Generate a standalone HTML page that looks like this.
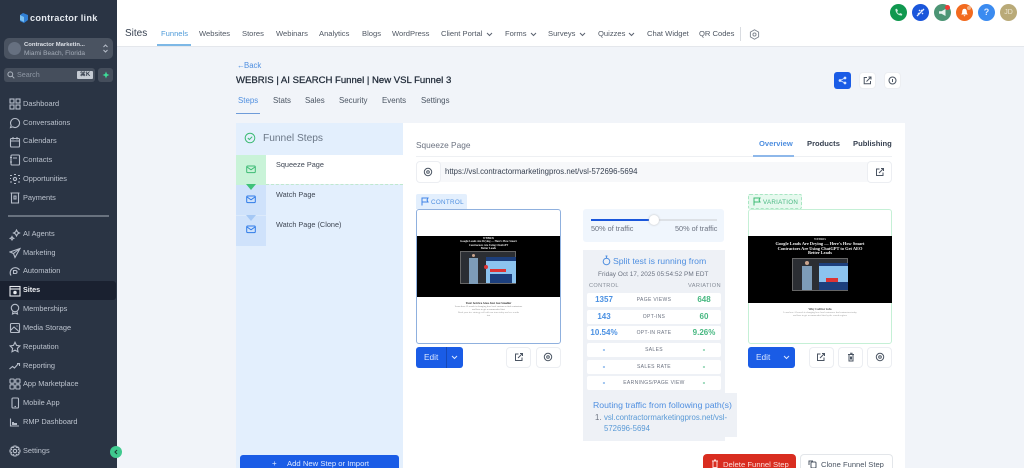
<!DOCTYPE html>
<html style="height:468px;overflow:hidden;background:#f1f4f9"><head><meta charset="utf-8"><title>Sites</title>
<style>
*{box-sizing:border-box}
html,body{margin:0;padding:0}
body{width:1024px;height:468px;overflow:hidden;position:relative;background:#f1f4f9;font-family:"Liberation Sans",sans-serif;color:#374151;filter:blur(.3px)}
.a{position:absolute;white-space:nowrap}
#side{position:absolute;left:0;top:0;width:117px;height:468px;background:#2a3444}
.ni{position:absolute;left:23px;font-size:7.4px;line-height:10px;color:#bcc3ce;white-space:nowrap}
.ic{position:absolute;left:9px;width:12px;height:12px;fill:none;stroke:#b6bdc9;stroke-width:1.1}
.tn{position:absolute;top:29px;font-size:7.6px;line-height:10px;color:#4f5763;white-space:nowrap}
.chev{position:absolute;top:32px;width:7px;height:5px;fill:none;stroke:#5a6270;stroke-width:1}
.circ{position:absolute;top:4px;width:17px;height:17px;border-radius:50%}
.sq{position:absolute;background:#fff;border:1px solid #eceef2;border-radius:4px}
.row{position:absolute;left:587px;width:134px;height:14px;background:#fff;border-radius:2px}
.row .l,.row .r{position:absolute;top:1px;width:34px;text-align:center;font-size:8px;font-weight:bold;line-height:11px}
.row .l{left:0;color:#4a90e2}.row .r{right:0;color:#47b881}
.row .m{position:absolute;left:24px;right:24px;top:4px;text-align:center;font-size:5px;line-height:7px;letter-spacing:.35px;color:#6b7280}
.dk{position:absolute;stroke:#4b5563;stroke-width:1;fill:none}
.th{position:absolute;text-align:center;font-family:"Liberation Serif",serif;white-space:nowrap}
</style></head><body>

<div id="side">
  <svg class="a" style="left:18px;top:12px" width="12" height="12" viewBox="0 0 12 12"><path d="M5 1l5 2v5l-4 3-4-2V3z" fill="#2f7fd6"/><path d="M2 3l4 2v5l-4-2z" fill="#7cc0f0"/></svg>
  <div class="a" style="left:30px;top:12px;font-size:9.2px;line-height:12px;font-weight:bold;color:#e5e9ef;letter-spacing:.25px">contractor link</div>

  <div class="a" style="left:4px;top:38px;width:109px;height:21px;background:#4a5361;border-radius:5px"></div>
  <div class="a" style="left:8px;top:42px;width:13px;height:13px;border-radius:50%;background:#667080"></div>
  <div class="a" style="left:24px;top:41px;font-size:5.9px;line-height:8px;font-weight:bold;color:#dde1e7">Contractor Marketin...</div>
  <div class="a" style="left:24px;top:50px;font-size:6.5px;line-height:8px;color:#a4acb8">Miami Beach, Florida</div>
  <svg class="a" style="left:102px;top:43px" width="7" height="11" viewBox="0 0 7 11" fill="none" stroke="#b6bdc9" stroke-width="1"><path d="M1.5 4L3.5 2L5.500 4M1.500 7L3.500 9L5.500 7"/></svg>

  <div class="a" style="left:4px;top:68px;width:91px;height:14px;background:#454e5c;border-radius:3px"></div>
  <svg class="a" style="left:7px;top:71px" width="8" height="8" viewBox="0 0 8 8" fill="none" stroke="#aab2bd" stroke-width="1"><circle cx="3.3" cy="3.3" r="2.4"/><path d="M5.2 5.2L7.3 7.3"/></svg>
  <div class="a" style="left:17px;top:70px;font-size:7.2px;line-height:10px;color:#8d96a3">Search</div>
  <div class="a" style="left:77px;top:71px;width:16px;height:8px;background:#c6ccd4;border-radius:1px;font-size:6px;line-height:8px;text-align:center;color:#333c4a;font-weight:bold">⌘K</div>
  <div class="a" style="left:98px;top:68px;width:15px;height:14px;background:#454e5c;border-radius:3px"></div>
  <svg class="a" style="left:102px;top:71px" width="8" height="8" viewBox="0 0 8 8"><path d="M4 0.5L5 3L7.5 4L5 5L4 7.5L3 5L0.5 4L3 3z" fill="#3ddc97"/></svg>

  <div class="a" style="left:0;top:281px;width:116px;height:19px;background:#1a2130;border-radius:0 3px 3px 0"></div>

  <svg class="ic" style="top:98px" viewBox="0 0 12 12"><rect x="1" y="1" width="4" height="4"/><rect x="7" y="1" width="4" height="4"/><rect x="1" y="7" width="4" height="4"/><rect x="7" y="7" width="4" height="4"/></svg>
  <div class="ni" style="top:99px">Dashboard</div>
  <svg class="ic" style="top:117px" viewBox="0 0 12 12"><path d="M6 1.5a4.5 4.5 0 1 1-2.2 8.400L1.500 10.600l.7-2.300A4.500 4.500 0 0 1 6 1.500z"/></svg>
  <div class="ni" style="top:118px">Conversations</div>
  <svg class="ic" style="top:136px" viewBox="0 0 12 12"><rect x="1.500" y="2.500" width="9" height="8.500" rx="1"/><path d="M1.500 5h9M4 1v2.500M8 1v2.500"/></svg>
  <div class="ni" style="top:136px">Calendars</div>
  <svg class="ic" style="top:154px" viewBox="0 0 12 12"><rect x="2" y="1" width="8.500" height="10" rx="1"/><path d="M4 4h4M1 3.500h2M1 8h2"/></svg>
  <div class="ni" style="top:155px">Contacts</div>
  <svg class="ic" style="top:173px" viewBox="0 0 12 12"><circle cx="6" cy="6" r="1.600"/><path d="M1 2.500h2M1 5.500h1M1 9h2M9 2.500h2M10 5.500h1M9 9h2M5 1.500h2M5 10.500h2"/></svg>
  <div class="ni" style="top:174px">Opportunities</div>
  <svg class="ic" style="top:192px" viewBox="0 0 12 12"><path d="M2.500 1h7v10h-7zM1.500 1h9M5 4h2v3H5z"/></svg>
  <div class="ni" style="top:193px">Payments</div>

  <div class="a" style="left:8px;top:215px;width:101px;height:2px;background:#69727f"></div>

  <svg class="ic" style="top:229px" viewBox="0 0 12 12"><path d="M7.500 1l1 2 2 1-2 1-1 2-1-2-2-1 2-1zM3 7.500l.6 1.200 1.200.6-1.200.6L3 11l-.6-1.100-1.200-.6 1.200-.6z"/></svg>
  <div class="ni" style="top:229px">AI Agents</div>
  <svg class="ic" style="top:247px" viewBox="0 0 12 12"><path d="M11 1.500L1 5l3.500 1.500L6 10.500zM11 1.500L4.500 6.500"/></svg>
  <div class="ni" style="top:248px">Marketing</div>
  <svg class="ic" style="top:266px" viewBox="0 0 12 12"><path d="M2 9.500A5 5 0 1 1 10.500 4M4.500 8V4.500h2a1.500 1.500 0 0 1 0 3h-2"/></svg>
  <div class="ni" style="top:266px">Automation</div>
  <svg class="ic" style="top:285px;stroke:#e8ebef" viewBox="0 0 12 12"><rect x="1" y="1.500" width="10" height="9.500"/><path d="M1 4h10"/><circle cx="6" cy="7.500" r="1.200" fill="#e8ebef"/></svg>
  <div class="ni" style="top:285px;color:#eef0f3;font-weight:bold;font-size:7.2px">Sites</div>
  <svg class="ic" style="top:303px" viewBox="0 0 12 12"><circle cx="6" cy="5" r="3.700"/><path d="M4 8.200L3.500 11 6 10l2.500 1L8 8.200"/></svg>
  <div class="ni" style="top:304px">Memberships</div>
  <svg class="ic" style="top:322px" viewBox="0 0 12 12"><rect x="1.500" y="1.500" width="9" height="9" rx="1"/><path d="M1.500 8.500L5 5l5.500 5M7.500 4h1"/></svg>
  <div class="ni" style="top:323px">Media Storage</div>
  <svg class="ic" style="top:341px" viewBox="0 0 12 12"><path d="M6 1.300l1.500 3.100 3.400.5-2.500 2.400.6 3.400L6 9.100l-3 1.600.6-3.400L1.100 4.900l3.400-.5z"/></svg>
  <div class="ni" style="top:342px">Reputation</div>
  <svg class="ic" style="top:360px" viewBox="0 0 12 12"><path d="M.5 9l3-2.500 2 1.500 4-4.500M8 3.500h2.500V6"/></svg>
  <div class="ni" style="top:361px">Reporting</div>
  <svg class="ic" style="top:378px" viewBox="0 0 12 12"><rect x="1" y="1" width="4.200" height="4.200" rx=".8"/><rect x="6.800" y="1" width="4.200" height="4.200" rx=".8"/><rect x="1" y="6.800" width="4.200" height="4.200" rx=".8"/><rect x="6.800" y="6.800" width="4.200" height="4.200" rx=".8"/></svg>
  <div class="ni" style="top:379px">App Marketplace</div>
  <svg class="ic" style="top:397px" viewBox="0 0 12 12"><rect x="3" y="1" width="6.500" height="10" rx="1"/><path d="M5.500 9.500h1.500"/></svg>
  <div class="ni" style="top:398px">Mobile App</div>
  <svg class="ic" style="top:416px" viewBox="0 0 12 12"><path d="M1.500 2.500V10h8.500"/><path d="M3 6h2v3H3zM5 7h3v2H5z" fill="#b6bdc9" stroke="none"/></svg>
  <div class="ni" style="top:417px">RMP Dashboard</div>
  <svg class="ic" style="top:445px" viewBox="0 0 12 12"><circle cx="6" cy="6" r="1.700"/><path d="M5 1h2l.4 1.500 1.400-.6 1.300 1.300-.7 1.400L11 5v2l-1.500.4.700 1.400-1.400 1.300-1.400-.7L7 11H5l-.4-1.500-1.400.7L1.900 8.800l.7-1.400L1 7V5l1.600-.4-.7-1.400 1.300-1.300 1.400.6z"/></svg>
  <div class="ni" style="top:446px">Settings</div>
</div>
<div class="a" style="left:110px;top:446px;width:12px;height:12px;border-radius:50%;background:#3fc98e"></div>
<svg class="a" style="left:113px;top:449px" width="6" height="6" viewBox="0 0 6 6" fill="none" stroke="#1f3b33" stroke-width="1.100"><path d="M4 1L2 3l2 2"/></svg>

<!-- top bar -->
<div class="a" style="left:117px;top:0;width:907px;height:47px;background:#fff;border-bottom:1px solid #e4e7ec"></div>
<div class="a" style="left:125px;top:27px;font-size:10px;line-height:13px;color:#374151">Sites</div>
<div class="tn" style="left:161px;color:#4f9bd9">Funnels</div>
<div class="a" style="left:157px;top:44px;width:34px;height:1.500px;background:#7db8e6"></div>
<div class="tn" style="left:199px">Websites</div>
<div class="tn" style="left:242px">Stores</div>
<div class="tn" style="left:276px">Webinars</div>
<div class="tn" style="left:319px">Analytics</div>
<div class="tn" style="left:362px">Blogs</div>
<div class="tn" style="left:392px">WordPress</div>
<div class="tn" style="left:441px">Client Portal</div>
<svg class="chev" style="left:486px" viewBox="0 0 7 5"><path d="M1 1l2.500 2.500L6 1"/></svg>
<div class="tn" style="left:505px">Forms</div>
<svg class="chev" style="left:530px" viewBox="0 0 7 5"><path d="M1 1l2.500 2.500L6 1"/></svg>
<div class="tn" style="left:548px">Surveys</div>
<svg class="chev" style="left:579px" viewBox="0 0 7 5"><path d="M1 1l2.500 2.500L6 1"/></svg>
<div class="tn" style="left:598px">Quizzes</div>
<svg class="chev" style="left:628px" viewBox="0 0 7 5"><path d="M1 1l2.500 2.500L6 1"/></svg>
<div class="tn" style="left:647px">Chat Widget</div>
<div class="tn" style="left:699px">QR Codes</div>
<div class="a" style="left:740px;top:27px;width:1px;height:14px;background:#d9dce1"></div>
<svg class="a" style="left:749px;top:29px" width="11" height="11" viewBox="0 0 12 12" fill="none" stroke="#7a818c" stroke-width="1"><circle cx="6" cy="6" r="1.700"/><path d="M6 .8l4.500 2.600v5.200L6 11.200 1.500 8.600V3.400z"/></svg>

<div class="circ" style="left:890px;background:#10984f"></div>
<svg class="a" style="left:894px;top:8px" width="9" height="9" viewBox="0 0 9 9"><path d="M1.500 1L3 .8 4 3 3 3.800c.4.900 1.200 1.700 2.200 2.200L6 5l2.200 1-.2 1.500C4.500 8 1 4.500 1.500 1z" fill="#cdeedd"/></svg>
<div class="circ" style="left:912px;background:#1a56db"></div>
<svg class="a" style="left:916px;top:8px" width="9" height="9" viewBox="0 0 9 9" fill="none" stroke="#e3ecff" stroke-width="1.300"><path d="M1 8L8 1M3 2l1 1M6 5l1 1M2 5l1 1M5 2l1 1"/></svg>
<div class="circ" style="left:934px;background:#4c9575"></div>
<svg class="a" style="left:938px;top:8px" width="9" height="9" viewBox="0 0 9 9"><path d="M1 3.200h2.500L7.500 1v7L3.500 5.800H1z" fill="#e8f3ee"/></svg>
<div class="a" style="left:945px;top:5px;width:5px;height:5px;border-radius:50%;background:#ef3b36"></div>
<div class="circ" style="left:956px;background:#f26a1e"></div>
<svg class="a" style="left:960px;top:8px" width="9" height="9" viewBox="0 0 9 9"><path d="M4.500.8C6.300.8 6.800 2.500 6.800 4c0 1.200.7 2 1 2.500H1.200c.3-.5 1-1.300 1-2.500 0-1.500.5-3.200 2.300-3.200zM3.500 7.300h2L4.500 8.500z" fill="#fff"/></svg>
<div class="a" style="left:967px;top:6px;width:4px;height:4px;border-radius:50%;background:#f5b183"></div>
<div class="circ" style="left:978px;background:#3b8bf0;color:#dfeaff;font-size:9px;font-weight:bold;text-align:center;line-height:17px">?</div>
<div class="circ" style="left:1000px;background:#b9aa78;color:#ece6d2;font-size:7px;text-align:center;line-height:17px">JD</div>

<!-- header -->
<div class="a" style="left:237px;top:61px;font-size:7.8px;line-height:10px;color:#4f8fe0">←</div>
<div class="a" style="left:244px;top:61px;font-size:7.8px;line-height:10px;color:#4f8fe0">Back</div>
<div class="a" style="left:236px;top:74px;font-size:9.55px;line-height:14px;color:#1f2937;-webkit-text-stroke:.25px #1f2937">WEBRIS | AI SEARCH Funnel | New VSL Funnel 3</div>
<div class="a" style="left:238px;top:96px;font-size:7.9px;line-height:10px;color:#4f8fe0">Steps</div>
<div class="a" style="left:236px;top:113px;width:24px;height:1px;background:#6f9cd9"></div>
<div class="a" style="left:273px;top:96px;font-size:7.9px;line-height:10px;color:#4b5563">Stats</div>
<div class="a" style="left:305px;top:96px;font-size:7.9px;line-height:10px;color:#4b5563">Sales</div>
<div class="a" style="left:339px;top:96px;font-size:7.9px;line-height:10px;color:#4b5563">Security</div>
<div class="a" style="left:382px;top:96px;font-size:7.9px;line-height:10px;color:#4b5563">Events</div>
<div class="a" style="left:421px;top:96px;font-size:7.9px;line-height:10px;color:#4b5563">Settings</div>

<div class="a" style="left:834px;top:72px;width:17px;height:17px;border-radius:3px;background:#1a5ce6"></div>
<svg class="a" style="left:838px;top:76px" width="9" height="9" viewBox="0 0 9 9" fill="#dce8ff" stroke="#dce8ff" stroke-width=".7"><circle cx="2" cy="4.500" r="1"/><circle cx="7" cy="2" r="1"/><circle cx="7" cy="7" r="1"/><path d="M2 4.500L7 2M2 4.500L7 7"/></svg>
<div class="sq" style="left:859px;top:72px;width:17px;height:17px"></div>
<svg class="dk" style="left:863px;top:76px" width="9" height="9" viewBox="0 0 9 9"><path d="M4 1.500H1.200v6.300h6.300V5M3.500 5.500L8 1M5.500 1H8v2.500"/></svg>
<div class="sq" style="left:884px;top:72px;width:17px;height:17px"></div>
<svg class="dk" style="left:888px;top:76px" width="9" height="9" viewBox="0 0 9 9"><circle cx="4.500" cy="4.500" r="3.500"/><path d="M4.500 3v3"/></svg>

<!-- funnel steps panel -->
<div class="a" style="left:236px;top:123px;width:167px;height:345px;background:#e3effd"></div>
<svg class="a" style="left:244px;top:132px" width="12" height="12" viewBox="0 0 12 12" fill="none" stroke="#3dbb74" stroke-width="1"><circle cx="6" cy="6" r="4.800"/><path d="M3.800 6l1.600 1.500 2.800-2.800"/></svg>
<div class="a" style="left:263px;top:132px;font-size:10.2px;line-height:14px;color:#6b7787">Funnel Steps</div>
<div class="a" style="left:236px;top:155px;width:30px;height:30px;background:#c9f3d8"></div>
<div class="a" style="left:266px;top:155px;width:137px;height:29px;background:#fff"></div>
<div class="a" style="left:266px;top:184px;width:137px;height:0;border-top:1px dashed #bfe8cf"></div>
<div class="a" style="left:236px;top:185px;width:30px;height:61px;background:#cfe2fb"></div>
<div class="a" style="left:236px;top:215px;width:30px;height:1px;background:#dceafb"></div>
<svg class="a" style="left:246px;top:184px" width="10" height="6" viewBox="0 0 10 6"><path d="M0 0h10L5 6z" fill="#3fc279"/></svg>
<svg class="a" style="left:246px;top:215px" width="10" height="6" viewBox="0 0 10 6"><path d="M0 0h10L5 6z" fill="#a5c8f5"/></svg>
<svg class="a" style="left:246px;top:165px" width="10" height="9" viewBox="0 0 10 9" fill="none" stroke="#3dbb74" stroke-width="1"><rect x=".7" y="1" width="8.600" height="6.600" rx="1"/><path d="M1 2l4 2.800L9 2"/></svg>
<svg class="a" style="left:246px;top:195px" width="10" height="9" viewBox="0 0 10 9" fill="none" stroke="#2f7be8" stroke-width="1"><rect x=".7" y="1" width="8.600" height="6.600" rx="1"/><path d="M1 2l4 2.800L9 2"/></svg>
<svg class="a" style="left:246px;top:225px" width="10" height="9" viewBox="0 0 10 9" fill="none" stroke="#2f7be8" stroke-width="1"><rect x=".7" y="1" width="8.600" height="6.600" rx="1"/><path d="M1 2l4 2.800L9 2"/></svg>
<div class="a" style="left:276px;top:160px;font-size:7.3px;line-height:10px;color:#3f4754">Squeeze Page</div>
<div class="a" style="left:276px;top:190px;font-size:7.3px;line-height:10px;color:#3f4754">Watch Page</div>
<div class="a" style="left:276px;top:220px;font-size:7.3px;line-height:10px;color:#3f4754">Watch Page (Clone)</div>
<div class="a" style="left:240px;top:455px;width:159px;height:13px;background:#1a5ce6;border-radius:3px 3px 0 0"></div>
<div class="a" style="left:272px;top:459px;font-size:8px;line-height:10px;color:#dce8ff">+</div>
<div class="a" style="left:287px;top:459px;font-size:7.7px;line-height:10px;color:#dce8ff">Add New Step or Import</div>

<!-- white card -->
<div class="a" style="left:403px;top:123px;width:502px;height:345px;background:#fff"></div>
<div class="a" style="left:416px;top:139px;font-size:8.3px;line-height:12px;color:#6b7280">Squeeze Page</div>
<div class="a" style="left:416px;top:156px;width:476px;height:1px;background:#eef0f3"></div>
<div class="a" style="left:759px;top:138px;font-size:7.6px;line-height:11px;color:#4f8fe0;font-weight:bold">Overview</div>
<div class="a" style="left:753px;top:155px;width:41px;height:1.500px;background:#8eb8ea"></div>
<div class="a" style="left:807px;top:138px;font-size:7.6px;line-height:11px;color:#374151;font-weight:bold">Products</div>
<div class="a" style="left:853px;top:138px;font-size:7.6px;line-height:11px;color:#374151;font-weight:bold">Publishing</div>

<div class="a" style="left:416px;top:162px;width:476px;height:20px;background:#f7f8fa;border-radius:3px"></div>
<div class="sq" style="left:416px;top:161px;width:25px;height:22px"></div>
<svg class="dk" style="left:423px;top:167px" width="10" height="10" viewBox="0 0 10 10"><circle cx="5" cy="5" r="3.700"/><circle cx="5" cy="5" r="1.300"/></svg>
<div class="a" style="left:445px;top:166px;font-size:7.8px;line-height:11px;color:#374151">https://vsl.contractormarketingpros.net/vsl-572696-5694</div>
<div class="sq" style="left:867px;top:161px;width:25px;height:22px"></div>
<svg class="dk" style="left:875px;top:167px" width="10" height="10" viewBox="0 0 10 10"><path d="M4.500 2H1.500v6.500H8V5.500M4 6l4.500-4.500M6 1.500h2.500V4"/></svg>

<!-- control -->
<div class="a" style="left:416px;top:194px;width:51px;height:15px;background:#e3effd;border-radius:2px 2px 0 0"></div>
<svg class="a" style="left:421px;top:197px" width="8" height="9" viewBox="0 0 8 9" fill="none" stroke="#3f83e6" stroke-width="1"><path d="M1 8.500V1h6L6 3l1 2H1"/></svg>
<div class="a" style="left:431px;top:198px;font-size:6.3px;line-height:9px;color:#4f8fe0;letter-spacing:.3px">CONTROL</div>
<div class="a" style="left:416px;top:209px;width:145px;height:135px;background:#fff;border:1px solid #8fb0de;border-radius:3px"></div>
<div class="a" style="left:417px;top:236px;width:143px;height:61px;background:#000"></div>
<div class="th" style="left:417px;width:143px;top:237px;font-size:2.8px;line-height:3.4px;color:#e8e8e8;font-weight:bold">WEBRIS<br>Google Leads Are Drying — Here's How Smart<br>Contractors Are Using ChatGPT<br>Better Leads</div>
<div class="a" style="left:460px;top:251px;width:56px;height:33px;background:#2b2e33;border:1px solid #666"></div>
<div class="a" style="left:472px;top:254px;width:3px;height:3px;border-radius:50%;background:#c9a48d"></div>
<div class="a" style="left:469px;top:258px;width:9px;height:26px;background:#7d9cb8"></div>
<div class="a" style="left:486px;top:257px;width:30px;height:26px;background:#8cc3ef"></div>
<div class="a" style="left:486px;top:257px;width:30px;height:4px;background:#1c3f7d"></div>
<div class="a" style="left:490px;top:274px;width:22px;height:9px;background:#1c3f7d"></div>
<div class="a" style="left:490px;top:269px;width:16px;height:3px;background:#d33"></div>
<div class="a" style="left:484px;top:265px;width:4px;height:4px;border-radius:50%;background:#d33"></div>
<div class="th" style="left:417px;width:143px;top:301px;font-size:3px;line-height:4px;color:#333;font-weight:bold">Your Service Area Just Got Smaller</div>
<div class="th" style="left:417px;width:143px;top:305px;font-size:2.4px;line-height:3px;color:#888">Learn how AI search is changing how local customers find contractors<br>and how to get recommended first</div>
<div class="th" style="left:417px;width:143px;top:311px;font-size:2.4px;line-height:3px;color:#999">Book your free strategy call with our team today and see results<br>fast</div>

<div class="a" style="left:416px;top:347px;width:47px;height:21px;background:#1a5ce6;border-radius:3px"></div>
<div class="a" style="left:424px;top:352px;font-size:8.3px;line-height:11px;color:#dce8ff">Edit</div>
<div class="a" style="left:446px;top:347px;width:1px;height:21px;background:#1548b8"></div>
<svg class="a" style="left:451px;top:355px" width="7" height="5" viewBox="0 0 7 5" fill="none" stroke="#dce8ff" stroke-width="1"><path d="M1 1l2.500 2.500L6 1"/></svg>
<div class="sq" style="left:506px;top:347px;width:25px;height:21px"></div>
<svg class="dk" style="left:514px;top:352px" width="10" height="10" viewBox="0 0 10 10"><path d="M4.500 2H1.500v6.500H8V5.500M4 6l4.500-4.500M6 1.500h2.500V4"/></svg>
<div class="sq" style="left:536px;top:347px;width:25px;height:21px"></div>
<svg class="dk" style="left:543px;top:352px" width="10" height="10" viewBox="0 0 10 10"><circle cx="5" cy="5" r="3.700"/><circle cx="5" cy="5" r="1.300"/></svg>

<!-- traffic slider -->
<div class="a" style="left:583px;top:209px;width:141px;height:33px;background:#f0f6fd;border-radius:3px"></div>
<div class="a" style="left:591px;top:219px;width:126px;height:2px;background:#dde1e6"></div>
<div class="a" style="left:591px;top:219px;width:62px;height:2px;background:#1a56db"></div>
<div class="a" style="left:649px;top:215px;width:10px;height:10px;border-radius:50%;background:#fff;box-shadow:0 0 2px #bbb"></div>
<div class="a" style="left:591px;top:224px;font-size:7.3px;line-height:10px;color:#6b7280">50% of traffic</div>
<div class="a" style="left:675px;top:224px;font-size:7.3px;line-height:10px;color:#6b7280">50% of traffic</div>

<!-- stats -->
<div class="a" style="left:583px;top:250px;width:142px;height:191px;background:#eef1f6"></div>
<div class="a" style="left:583px;top:393px;width:154px;height:44px;background:#eef1f6"></div>
<svg class="a" style="left:602px;top:255px" width="9" height="11" viewBox="0 0 9 11" fill="none" stroke="#4f8fe0" stroke-width="1"><circle cx="4.500" cy="6.500" r="3.300"/><path d="M3.500 1h2M4.500 1v2"/></svg>
<div class="a" style="left:613px;top:255px;font-size:8.7px;line-height:12px;color:#4f8fe0">Split test is running from</div>
<div class="a" style="left:598px;top:270px;font-size:6.4px;line-height:9px;color:#6b7280;letter-spacing:.05px">Friday Oct 17, 2025 05:54:52 PM EDT</div>
<div class="a" style="left:589px;top:282px;font-size:5.6px;line-height:8px;color:#858c97;letter-spacing:.35px">CONTROL</div>
<div class="a" style="left:688px;top:282px;font-size:5.7px;line-height:8px;color:#858c97;letter-spacing:.35px">VARIATION</div>

<div class="row" style="top:293px"><span class="l">1357</span><span class="m">PAGE VIEWS</span><span class="r">648</span></div>
<div class="row" style="top:310px"><span class="l">143</span><span class="m">OPT-INS</span><span class="r">60</span></div>
<div class="row" style="top:326px"><span class="l">10.54%</span><span class="m">OPT-IN RATE</span><span class="r">9.26%</span></div>
<div class="row" style="top:343px"><span class="l">-</span><span class="m">SALES</span><span class="r">-</span></div>
<div class="row" style="top:360px"><span class="l">-</span><span class="m">SALES RATE</span><span class="r">-</span></div>
<div class="row" style="top:376px"><span class="l">-</span><span class="m">EARNINGS/PAGE VIEW</span><span class="r">-</span></div>

<div class="a" style="left:593px;top:399px;font-size:8.7px;line-height:12px;color:#4f8fe0">Routing traffic from following path(s)</div>
<div class="a" style="left:595px;top:412px;font-size:7.8px;line-height:11px;color:#6b7280">1.</div>
<div class="a" style="left:604px;top:412px;font-size:7.8px;line-height:11px;color:#5a9ad6">vsl.contractormarketingpros.net/vsl-</div>
<div class="a" style="left:604px;top:423px;font-size:7.8px;line-height:11px;color:#5a9ad6">572696-5694</div>

<!-- variation -->
<div class="a" style="left:748px;top:194px;width:54px;height:15px;background:#e6f9ee;border:1px dashed #a9e6c3;border-radius:2px"></div>
<svg class="a" style="left:753px;top:197px" width="8" height="9" viewBox="0 0 8 9" fill="none" stroke="#3dbb74" stroke-width="1"><path d="M1 8.500V1h6L6 3l1 2H1"/></svg>
<div class="a" style="left:763px;top:198px;font-size:6.200px;line-height:9px;color:#47b881;letter-spacing:.3px">VARIATION</div>
<div class="a" style="left:748px;top:209px;width:144px;height:135px;background:#fff;border:1px solid #c5f0d6;border-radius:3px"></div>
<div class="a" style="left:748px;top:236px;width:144px;height:67px;background:#000"></div>
<div class="th" style="left:748px;width:144px;top:238px;font-size:3px;line-height:3px;color:#ccc;font-weight:bold">WEBRIS</div>
<div class="th" style="left:748px;width:144px;top:242px;font-size:4.4px;line-height:4.5px;color:#f2f2f2;font-weight:bold">Google Leads Are Drying — Here's How Smart<br>Contractors Are Using ChatGPT to Get AEO<br>Better Leads</div>
<div class="a" style="left:792px;top:258px;width:56px;height:33px;background:#2b2e33;border:1px solid #666"></div>
<div class="a" style="left:805px;top:261px;width:4px;height:4px;border-radius:50%;background:#c9a48d"></div>
<div class="a" style="left:802px;top:266px;width:10px;height:24px;background:#7d9cb8"></div>
<div class="a" style="left:819px;top:263px;width:29px;height:27px;background:#8cc3ef"></div>
<div class="a" style="left:819px;top:263px;width:29px;height:3px;background:#1c3f7d"></div>
<div class="a" style="left:826px;top:278px;width:12px;height:4px;background:#d33"></div>
<div class="a" style="left:819px;top:282px;width:29px;height:8px;background:#1c3f7d"></div>
<div class="th" style="left:748px;width:144px;top:307px;font-size:3px;line-height:4px;color:#444;font-weight:bold">Why Call for Jobs</div>
<div class="th" style="left:748px;width:144px;top:311px;font-size:2.400px;line-height:3px;color:#999">Learn how AI search is changing how local customers find contractors today<br>and how to get recommended first by the search engines</div>

<div class="a" style="left:748px;top:347px;width:47px;height:21px;background:#1a5ce6;border-radius:3px"></div>
<div class="a" style="left:756px;top:352px;font-size:8.3px;line-height:11px;color:#dce8ff">Edit</div>
<svg class="a" style="left:783px;top:355px" width="7" height="5" viewBox="0 0 7 5" fill="none" stroke="#dce8ff" stroke-width="1"><path d="M1 1l2.500 2.500L6 1"/></svg>
<div class="sq" style="left:809px;top:347px;width:25px;height:21px"></div>
<svg class="dk" style="left:816px;top:352px" width="10" height="10" viewBox="0 0 10 10"><path d="M4.500 2H1.500v6.500H8V5.500M4 6l4.500-4.500M6 1.500h2.500V4"/></svg>
<div class="sq" style="left:838px;top:347px;width:25px;height:21px"></div>
<svg class="dk" style="left:846px;top:352px" width="10" height="10" viewBox="0 0 10 10"><path d="M2 2.500h6M3 2.500v6.500h4V2.500M4 1.200h2v1.300M4.500 4.500v3M5.500 4.500v3"/></svg>
<div class="sq" style="left:867px;top:347px;width:25px;height:21px"></div>
<svg class="dk" style="left:875px;top:352px" width="10" height="10" viewBox="0 0 10 10"><circle cx="5" cy="5" r="3.700"/><circle cx="5" cy="5" r="1.300"/></svg>

<!-- footer buttons -->
<div class="a" style="left:703px;top:454px;width:93px;height:14px;background:#d92d20;border-radius:4px 4px 0 0"></div>
<svg class="a" style="left:711px;top:459px" width="8" height="9" viewBox="0 0 8 9" fill="none" stroke="#fbdcd9" stroke-width="1"><path d="M1 2h6M2 2v6.500h4V2M3 1h2"/></svg>
<div class="a" style="left:723px;top:459px;font-size:7.7px;line-height:11px;color:#fbdcd9">Delete Funnel Step</div>
<div class="a" style="left:800px;top:454px;width:93px;height:14px;background:#fff;border:1px solid #e3e6ea;border-bottom:0;border-radius:4px 4px 0 0"></div>
<svg class="a" style="left:808px;top:460px" width="9" height="8" viewBox="0 0 9 8" fill="none" stroke="#4b5563" stroke-width="1"><rect x="3" y="2" width="5" height="6" rx="1"/><path d="M1 5V1h4"/></svg>
<div class="a" style="left:821px;top:459px;font-size:7.6px;line-height:11px;color:#4b5563">Clone Funnel Step</div>

</body></html>
